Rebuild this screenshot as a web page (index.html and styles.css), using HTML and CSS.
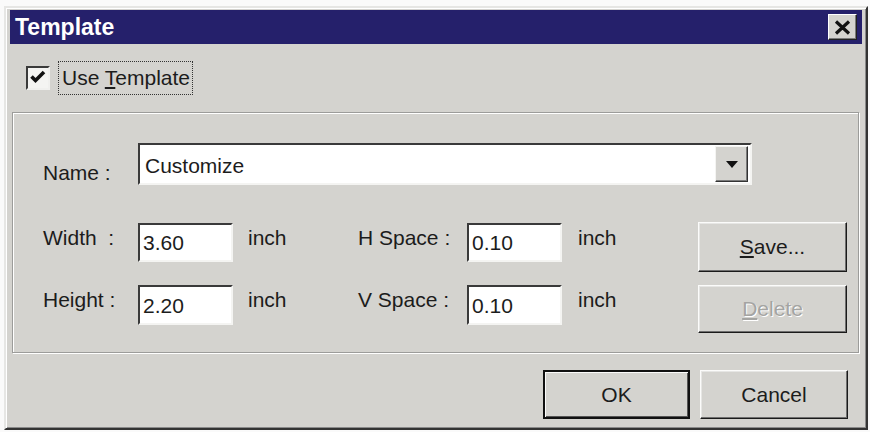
FILE: index.html
```html
<!DOCTYPE html>
<html>
<head>
<meta charset="utf-8">
<title>Template</title>
<link rel="stylesheet" href="styles.css">
</head>
<body>
<div class="window">
  <div class="titlebar">
    <span class="title">Template</span>
    <button class="close" aria-label="Close">
      <svg width="17" height="15" viewBox="0 0 17 15"><path d="M2 1.5 L15 13.5 M15 1.5 L2 13.5" stroke="#111" stroke-width="3.2" fill="none"/></svg>
    </button>
  </div>
  <div class="top">
    <span class="checkbox">
      <svg width="20" height="20" viewBox="0 0 20 20"><polyline points="3.5,8.5 7.5,12.5 16,4" stroke="#111" stroke-width="3.6" fill="none"/></svg>
    </span>
    <span class="focus">Use <u>T</u>emplate</span>
  </div>
  <div class="panel">
    <div class="name-row">
      <span class="label">Name :</span>
      <div class="combo">
        <span class="combo-text">Customize</span>
        <span class="combo-btn">
          <svg width="12" height="7" viewBox="0 0 12 7"><polygon points="0,0 12,0 6,7" fill="#111"/></svg>
        </span>
      </div>
    </div>
    <div class="field-row row1">
      <span class="label">Width&nbsp; :</span>
      <input class="field" value="3.60">
      <span class="unit">inch</span>
      <span class="label label2">H Space :</span>
      <input class="field" value="0.10">
      <span class="unit unit2">inch</span>
      <button class="btn side"><u>S</u>ave...</button>
    </div>
    <div class="field-row row2">
      <span class="label">Height :</span>
      <input class="field" value="2.20">
      <span class="unit">inch</span>
      <span class="label label2">V Space :</span>
      <input class="field" value="0.10">
      <span class="unit unit2">inch</span>
      <button class="btn side disabled"><u>D</u>elete</button>
    </div>
  </div>
  <div class="bottom">
    <button class="btn default">OK</button>
    <button class="btn cancel">Cancel</button>
  </div>
</div>
</body>
</html>
```
FILE: styles.css
```css
* { box-sizing: border-box; }

body {
  margin: 0;
  background: #fafafa;
  font-family: "Liberation Sans", Arial, sans-serif;
  font-size: 21px;
  color: #1c1c1c;
}

.window {
  margin: 6px 0 0 4px;
  width: 864px;
  height: 424px;
  background: #d4d3cf;
  border: 2px solid;
  border-color: #e6e6e4 #333 #333 #e6e6e4;
  box-shadow: inset 1px 1px 0 #fff, inset -1px -1px 0 #8a8a8a;
  padding: 2px 4px 0 4px;
  display: flex;
  flex-direction: column;
}

.titlebar {
  height: 34px;
  flex: none;
  background: #25206b;
  display: flex;
  align-items: center;
  justify-content: space-between;
  padding: 0 5px;
}

.title {
  color: #fff;
  font-weight: bold;
  font-size: 23px;
  line-height: 34px;
}

.close {
  width: 29px;
  height: 26px;
  padding: 0;
  background: #d4d3cf;
  border: 1px solid;
  border-color: #fff #222 #222 #fff;
  box-shadow: inset -1px -1px 0 #7a7a7a;
  display: flex;
  align-items: center;
  justify-content: center;
}

.top {
  height: 68px;
  flex: none;
  display: flex;
  align-items: center;
  padding-left: 16px;
  gap: 8px;
}

.checkbox {
  width: 24px;
  height: 24px;
  background: #f4f4f2;
  border: 2px solid;
  border-color: #3a3a3a #f0f0ee #f0f0ee #3a3a3a;
  display: flex;
}

.focus {
  border: 1px dotted #333;
  padding: 4px 2px 4px 3px;
  line-height: 24px;
}

.panel {
  flex: none;
  margin: 0 3px 0 2px;
  height: 241px;
  border: 1px solid #9c9c9a;
  box-shadow: inset 1px 1px 0 #fff, 1px 1px 0 #fff;
  padding: 30px 0 0 30px;
  display: flex;
  flex-direction: column;
}

.name-row {
  display: flex;
  align-items: flex-end;
  height: 42px;
  margin-bottom: 37px;
}

.label {
  flex: none;
  width: 95px;
  line-height: 24px;
}

.combo {
  width: 614px;
  height: 42px;
  background: #fff;
  border: 2px solid;
  border-color: #3a3a3a #f4f4f2 #f4f4f2 #3a3a3a;
  display: flex;
  align-items: center;
  padding-left: 5px;
}

.combo-text {
  line-height: 24px;
  padding-top: 3px;
}

.combo-btn {
  margin-left: auto;
  margin-right: 2px;
  width: 33px;
  height: 36px;
  background: #d4d3cf;
  border: 1px solid;
  border-color: #f4f4f2 #333 #333 #f4f4f2;
  box-shadow: inset -1px -1px 0 #7a7a7a;
  display: flex;
  align-items: center;
  justify-content: center;
}

.field-row {
  display: flex;
  align-items: flex-start;
  height: 50px;
}

.row2 {
  margin-top: 13px;
  height: 49px;
}

.field-row .label,
.unit {
  margin-top: 4px;
  line-height: 24px;
}

.row2 .label,
.row2 .unit {
  margin-top: 3px;
}

.field {
  flex: none;
  width: 95px;
  height: 39px;
  margin-top: 1px;
  font: inherit;
  color: inherit;
  line-height: 24px;
  background: #fff;
  border: 2px solid;
  border-color: #3a3a3a #f4f4f2 #f4f4f2 #3a3a3a;
  padding: 6px 0 5px 3px;
  outline: none;
}

.row2 .field {
  margin-top: 0;
  height: 40px;
}

.unit {
  flex: none;
  margin-left: 15px;
  width: 110px;
}

.label2 {
  width: 109px;
}

.unit2 {
  margin-left: 16px;
  width: 120px;
}

.btn {
  font: inherit;
  color: #1c1c1c;
  background: #d4d3cf;
  padding: 0;
  border: 1px solid;
  border-color: #fbfbfa #1a1a1a #1a1a1a #fbfbfa;
  box-shadow: inset -1px -1px 0 #6f6f6f, inset 1px 1px 0 #e6e6e4;
}

.side {
  flex: none;
  width: 149px;
  height: 50px;
}

.row2 .side {
  height: 48px;
}

.disabled {
  color: #a4a4a2;
  text-shadow: 1px 1px 0 #fff;
}

.bottom {
  flex: 1;
  display: flex;
  justify-content: flex-end;
  align-items: flex-start;
  padding: 17px 14px 0 0;
  gap: 10px;
}

.bottom .btn {
  width: 147px;
  height: 49px;
}

.bottom .cancel {
  width: 148px;
}

.default {
  border: 2px solid #111;
  box-shadow: inset 1px 1px 0 #fbfbfa, inset -1px -1px 0 #555;
}
```
